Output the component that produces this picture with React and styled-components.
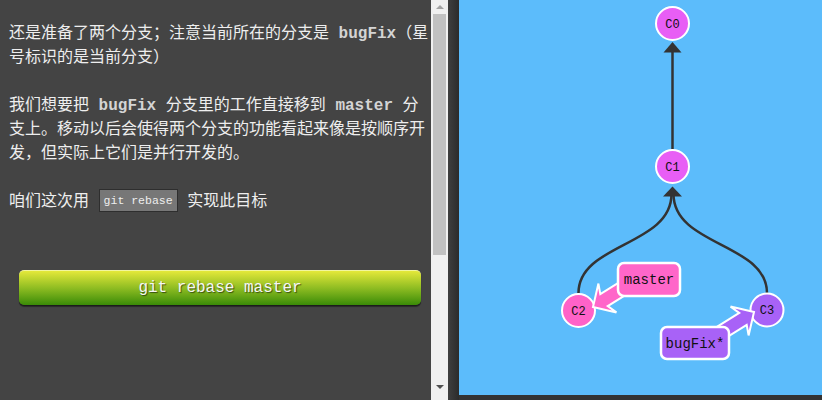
import React from "react";
import styled, { createGlobalStyle } from "styled-components";

const GlobalStyle = createGlobalStyle`
  html, body {
    margin: 0;
    padding: 0;
    background: #333;
  }
  body {
    overflow: hidden;
  }
`;

const nodes = [
  { id: "C0", x: 213.5, y: 23.5, color: "#e85ef5" },
  { id: "C1", x: 213.5, y: 166.5, color: "#e85ef5" },
  { id: "C2", x: 119.5, y: 310.5, color: "#ff62c8" },
  { id: "C3", x: 308, y: 310, color: "#a862f7" },
];

const branches = [
  {
    name: "master",
    color: "#ff66c9",
    box: { x: 159, y: 263, w: 62, h: 33 },
    tip: { x: 134, y: 307 },
    angle: 148,
  },
  {
    name: "bugFix*",
    color: "#a862f7",
    box: { x: 202, y: 327, w: 68, h: 32 },
    tip: { x: 295, y: 312 },
    angle: -32,
  },
];

function Node({ id, x, y, color }) {
  return (
    <g>
      <Circle cx={x} cy={y} r={16.5} fill={color} />
      <NodeText x={x} y={y + 1}>
        {id}
      </NodeText>
    </g>
  );
}

function BranchArrow({ tip, angle, color }) {
  return (
    <ArrowShape
      fill={color}
      transform={`translate(${tip.x} ${tip.y}) rotate(${angle})`}
      d="M0 0 L-17 -17 L-13 -7 L-46 -7 L-46 7 L-13 7 L-17 17 Z"
    />
  );
}

function BranchLabel({ name, color, box }) {
  return (
    <g>
      <LabelBox x={box.x} y={box.y} width={box.w} height={box.h} rx={6} fill={color} />
      <LabelText x={box.x + box.w / 2} y={box.y + box.h / 2 + 1}>
        {name}
      </LabelText>
    </g>
  );
}

export default function App() {
  return (
    <>
      <GlobalStyle />
      <Page>
        <LeftPane>
          <Content>
            <Para>
              还是准备了两个分支；注意当前所在的分支是 <Code>bugFix</Code>（星
              <br />
              号标识的是当前分支）
            </Para>
            <Para>
              我们想要把 <Code>bugFix</Code> 分支里的工作直接移到 <Code>master</Code> 分
              <br />
              支上。移动以后会使得两个分支的功能看起来像是按顺序开
              <br />
              发，但实际上它们是并行开发的。
            </Para>
            <Para>
              咱们这次用 <Command>git rebase</Command> 实现此目标
            </Para>
            <RunButton>git rebase master</RunButton>
          </Content>
          <Scrollbar>
            <ScrollButton>
              <Triangle $up />
            </ScrollButton>
            <Thumb />
            <ScrollButton $bottom>
              <Triangle />
            </ScrollButton>
          </Scrollbar>
        </LeftPane>
        <Divider />
        <CanvasWrap>
          <Canvas>
            <svg width="363" height="395" viewBox="0 0 363 395">
              <Edge d="M213.5 149 L213.5 50" />
              <Edge d="M119.5 293 C119.5 243 212.5 246 212.5 194" />
              <Edge d="M308 293 C308 243 214.5 246 214.5 194" />
              <ArrowHead points="213.5,42 204.5,52.5 222.5,52.5" />
              <ArrowHead points="213.5,186.5 204,196.5 223,196.5" />
              {nodes.map((n) => (
                <Node key={n.id} {...n} />
              ))}
              {branches.map((b) => (
                <BranchArrow key={b.name + "-arrow"} {...b} />
              ))}
              {branches.map((b) => (
                <BranchLabel key={b.name} {...b} />
              ))}
            </svg>
          </Canvas>
        </CanvasWrap>
      </Page>
    </>
  );
}

const Page = styled.div`
  display: flex;
  width: 822px;
  height: 400px;
  background: #333;
  overflow: hidden;
`;

const LeftPane = styled.div`
  display: flex;
  width: 448px;
  height: 400px;
  flex-shrink: 0;
`;

const Content = styled.div`
  flex: 1;
  background: #444;
  padding: 19px 0 0 9px;
  box-sizing: border-box;
  display: flex;
  flex-direction: column;
  font-family: "Noto Sans CJK SC", "Liberation Sans", sans-serif;
  font-size: 16px;
  line-height: 24px;
  color: #eee;
`;

const Para = styled.p`
  margin: 0 0 24px;
  white-space: nowrap;
  word-spacing: 6px;
`;

const Code = styled.span`
  font-family: "Liberation Mono", monospace;
  font-weight: bold;
  line-height: 16px;
  color: #d4d4d4;
  word-spacing: 0;
`;

const Command = styled.span`
  display: inline-block;
  font-family: "Liberation Mono", monospace;
  font-size: 11.5px;
  line-height: 13px;
  padding: 4px 4px;
  background: #777;
  border: 1px solid #2e2e2e;
  color: #eee;
  word-spacing: 0;
  vertical-align: 2px;
`;

const RunButton = styled.div`
  margin: 34px 10px 0;
  height: 35px;
  box-sizing: border-box;
  border-radius: 5px;
  border-top: 1px solid #f2f5a0;
  background: linear-gradient(to bottom, #e4e83a 0%, #8fbd22 50%, #3a8b08 100%);
  box-shadow: 0 1px 0 #1c1c1c, 0 2px 1px rgba(0, 0, 0, 0.4);
  display: flex;
  align-items: center;
  justify-content: center;
  font-family: "Liberation Mono", monospace;
  font-size: 16px;
  color: #f6f6f6;
  text-shadow: 1px 1px 1px rgba(0, 0, 0, 0.55);
`;

const Scrollbar = styled.div`
  width: 17px;
  height: 400px;
  background: #f0f0f0;
  display: flex;
  flex-direction: column;
`;

const ScrollButton = styled.div`
  height: ${(p) => (p.$bottom ? "20px" : "14px")};
  margin-top: ${(p) => (p.$bottom ? "auto" : "0")};
  display: flex;
  justify-content: center;
  align-items: flex-start;
  padding-top: 5px;
  box-sizing: border-box;
`;

const Triangle = styled.div`
  width: 0;
  height: 0;
  border-left: 4px solid transparent;
  border-right: 4px solid transparent;
  ${(p) =>
    p.$up
      ? "border-bottom: 4px solid #a3a3a3;"
      : "border-top: 4px solid #505050;"}
`;

const Thumb = styled.div`
  height: 241px;
  margin: 0 2px;
  background: #c1c1c1;
`;

const Divider = styled.div`
  width: 11px;
  height: 400px;
  flex-shrink: 0;
  background: linear-gradient(to right, #3f3f3f, #2b2b2b);
`;

const CanvasWrap = styled.div`
  flex: 1;
  height: 400px;
  background: #333;
`;

const Canvas = styled.div`
  height: 395px;
  background: #5cbcfb;
  svg {
    display: block;
  }
`;

const Circle = styled.circle`
  stroke: #fff;
  stroke-width: 2;
`;

const NodeText = styled.text`
  font-family: "Liberation Mono", monospace;
  font-size: 12px;
  fill: #111;
  text-anchor: middle;
  dominant-baseline: middle;
`;

const Edge = styled.path`
  fill: none;
  stroke: #333;
  stroke-width: 2.5;
`;

const ArrowHead = styled.polygon`
  fill: #333;
`;

const ArrowShape = styled.path`
  stroke: #fff;
  stroke-width: 2;
  stroke-linejoin: miter;
`;

const LabelBox = styled.rect`
  stroke: #fff;
  stroke-width: 2.5;
`;

const LabelText = styled.text`
  font-family: "Liberation Mono", monospace;
  font-size: 14px;
  fill: #111;
  text-anchor: middle;
  dominant-baseline: middle;
`;
